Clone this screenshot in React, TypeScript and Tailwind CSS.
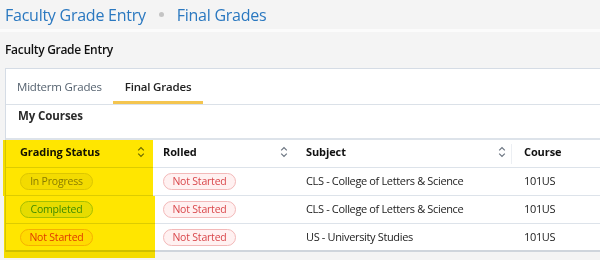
import type { ReactNode } from "react";

type Pill = { label: string; tone: "gray" | "green" | "orange" | "red" };

const rows: { status: Pill; rolled: Pill; subject: string; course: string }[] = [
  {
    status: { label: "In Progress", tone: "gray" },
    rolled: { label: "Not Started", tone: "red" },
    subject: "CLS - College of Letters & Science",
    course: "101US",
  },
  {
    status: { label: "Completed", tone: "green" },
    rolled: { label: "Not Started", tone: "red" },
    subject: "CLS - College of Letters & Science",
    course: "101US",
  },
  {
    status: { label: "Not Started", tone: "orange" },
    rolled: { label: "Not Started", tone: "red" },
    subject: "US - University Studies",
    course: "101US",
  },
];

const toneClass: Record<Pill["tone"], string> = {
  gray: "bg-[#f3f3f3] border-[#dcdcdc] text-[#8a8a8a]",
  green: "bg-[#e6f4c8] border-[#a6d46a] text-[#3f9a12]",
  orange: "bg-[#fff3ee] border-[#f6c4ad] text-[#e0401a]",
  red: "bg-[#fff1f1] border-[#f3b9b9] text-[#d9464a]",
};

function StatusPill({ pill }: { pill: Pill }) {
  return (
    <span
      className={`inline-flex h-[17px] w-[73px] items-center justify-center rounded-full border text-[10.5px] leading-none tracking-[-0.2px] ${toneClass[pill.tone]}`}
    >
      {pill.label}
    </span>
  );
}

function SortIcon() {
  return (
    <svg width="8" height="12" viewBox="0 0 8 12" fill="none" stroke="#6b7480" strokeWidth="1.2">
      <path d="M1.2 4.4L4 1.6L6.8 4.4" />
      <path d="M1.2 7.6L4 10.4L6.8 7.6" />
    </svg>
  );
}

function HeadCell({ children, sort, className }: { children: ReactNode; sort?: boolean; className: string }) {
  return (
    <div className={`flex items-center justify-between pb-[3px] ${className}`}>
      <span className="text-[11px] font-bold tracking-[-0.1px] text-[#111]">{children}</span>
      {sort && <SortIcon />}
    </div>
  );
}

export default function App() {
  return (
    <div className="relative h-[260px] w-[600px] overflow-hidden bg-[#f4f4f4] font-['Open_Sans',sans-serif]">
      <div className="flex h-[29px] items-center gap-[13px] pl-[5px] text-[16px] tracking-[-0.25px] text-[#2a78c0]">
        <span>Faculty Grade Entry</span>
        <span className="h-[5px] w-[5px] rounded-full bg-[#c4c4c4]" />
        <span>Final Grades</span>
      </div>
      <div className="h-[3px] bg-[#fbfbfb]" />
      <div className="flex h-[36px] items-center pl-[5px] text-[12px] font-semibold tracking-[-0.3px] text-[#111]">
        Faculty Grade Entry
      </div>

      <div className="ml-[5px] border-l border-t border-[#d5dce5] bg-white">
        <div className="flex h-[36px] border-b border-[#dbe1e8] text-[11.5px] tracking-[-0.2px]">
          <div className="flex items-center px-[11px] text-[#55626f]">Midterm Grades</div>
          <div className="flex items-center border-b-[3px] border-[#f4c54f] px-[12px] pt-[3px] font-semibold text-[#222]">
            Final Grades
          </div>
        </div>

        <div className="h-[33px] pl-[12px] pt-[1px] text-[11.5px] font-bold leading-[20px] tracking-[-0.1px] text-[#2a2a2a]">
          My Courses
        </div>

        <div className="border-t-2 border-[#dde3ea]">
          <div className="grid h-[28px] grid-cols-[147px_142px_217px_1fr] border-b border-[#dde3ea]">
            <HeadCell sort className="pl-[14px] pr-[8px]">Grading Status</HeadCell>
            <HeadCell sort className="pl-[10px] pr-[7px]">Rolled</HeadCell>
            <HeadCell sort className="relative pl-[11px] pr-[6px] after:absolute after:right-0 after:top-[4px] after:h-[20px] after:w-px after:bg-[#eceff3]">
              Subject
            </HeadCell>
            <HeadCell className="pl-[12px]">Course</HeadCell>
          </div>
          {rows.map((row, i) => (
            <div
              key={i}
              className={`grid h-[28px] grid-cols-[147px_142px_217px_1fr] items-center text-[11px] tracking-[-0.35px] text-[#222] ${
                i === rows.length - 1 ? "border-b-2 border-[#cfd5dc]" : "border-b border-[#dde3ea]"
              }`}
            >
              <div className="pl-[14px]">
                <StatusPill pill={row.status} />
              </div>
              <div className="pl-[10px]">
                <StatusPill pill={row.rolled} />
              </div>
              <div className="pl-[11px]">{row.subject}</div>
              <div className="pl-[12px]">{row.course}</div>
            </div>
          ))}
        </div>
      </div>

      {/* highlighter marks over the status column */}
      <div className="pointer-events-none absolute left-[3px] top-[140px] h-[56px] w-[150px] bg-[#ffe600] mix-blend-multiply" />
      <div className="pointer-events-none absolute left-[4px] top-[196px] h-[62px] w-[151px] bg-[#ffe600] mix-blend-multiply" />
    </div>
  );
}
